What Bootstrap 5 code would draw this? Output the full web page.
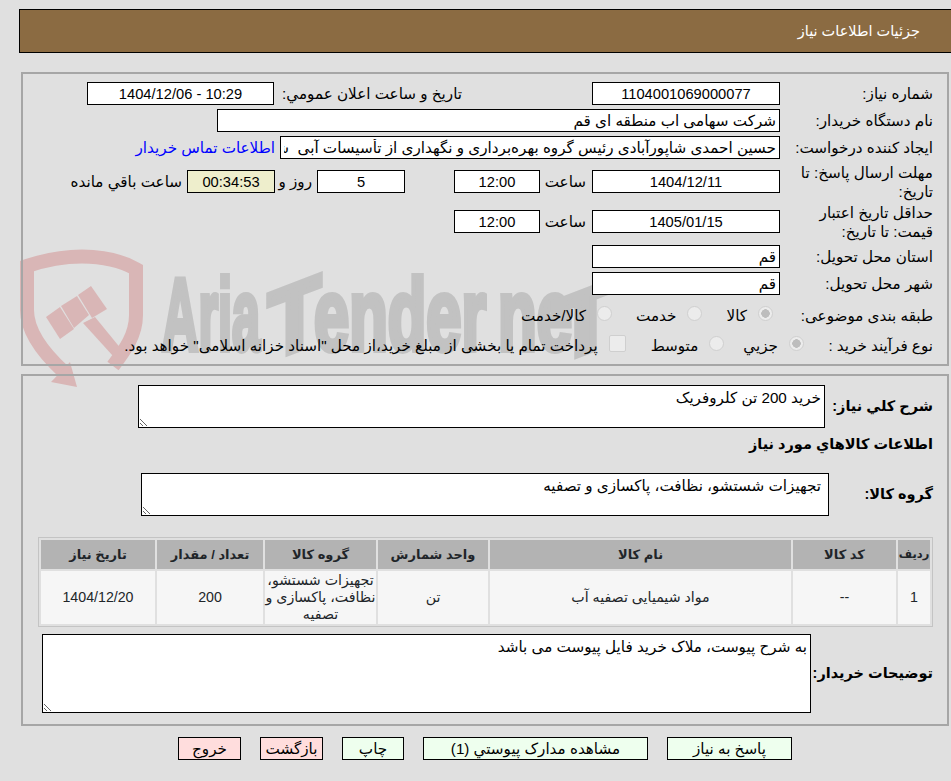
<!DOCTYPE html>
<html lang="fa" dir="rtl">
<head>
<meta charset="utf-8">
<title>جزئیات اطلاعات نیاز</title>
<link href="https://cdn.jsdelivr.net/npm/bootstrap@5.3.0/dist/css/bootstrap.min.css" rel="stylesheet">
<style>
html,body{height:781px;overflow:hidden}
body{background:#e0e0e0;color:#000;font:15.2px/19px "Liberation Sans","DejaVu Sans",sans-serif;position:relative}
.wm{position:absolute;left:0;top:0;z-index:-1;direction:ltr}
.wm-txt{font:700 102px "Liberation Sans",sans-serif;fill:#c2c2c2;stroke:#c2c2c2;stroke-width:6px}
.wm-t1{font-size:96px}
.wm-t2{font-size:90px}
.page-head{height:44px;margin:9px 0 19px 19px;background:#8b6b42;border:1px solid #000;border-right:0;color:#fff;padding-right:31px;font-size:14.5px}
.pane{margin:0 2px 8px 21px;border:2px solid #a6a6a6}
.pane-a{height:294px;padding-top:8px}
.pane-b{height:352px;padding-top:9px}
.frow{display:flex;align-items:center;height:23px;margin-bottom:4px}
.lbl{flex:none;width:167px;padding-right:14px}
.fld.form-control{flex:none;height:23px;min-height:0;padding:0 3px;border:1px solid #000;border-radius:0;background:#fff;color:#000;font:inherit;box-shadow:none}
.fld.num{font-size:14.7px}
.w-188{width:188px}.w-187{width:187px}.w-86{width:86px}.w-88{width:88px}
.w-563{width:563px}.w-500{width:500px}
.pub-lbl{margin-right:130px;width:182px}
.pub-val{margin-right:6px}
.row-first{margin-top:11px}
.row-second{margin-top:17px}
.row-prov{margin-top:12px}
.row-kind{margin-top:9px;margin-bottom:7px}
.hour-lbl{margin-right:6px;width:46px}
.day-val{margin-right:49px}
.day-lbl{margin-right:5px;width:37px}
.rem-lbl{margin-right:5px}
.hr-wait.form-control{background:#eeeecc;padding:0}
.buyer-link{margin-right:5px;color:#00f;text-decoration:none}
.chk{display:flex;align-items:center;flex:none}
.chk .form-check-input{flex:none;margin:0;float:none;width:15px;height:15px;background-color:#ececec;border:1px solid #cfcfcf;opacity:1;position:relative;top:-2px}
.chk .form-check-input:checked{background-color:#ececec;border-color:#cfcfcf;background-image:radial-gradient(circle,#bdbdbd 0 4px,transparent 4.5px);background-size:auto}
.chk .form-check-input[type=checkbox]{width:17px;height:17px;border-radius:2px}
.chk label{margin-right:11px;opacity:1!important;color:#000}
.m-k1{margin-right:7px}.m-k2{margin-right:24px}
.m-p1{margin-right:-24px}.m-p2{margin-right:19px}.m-p3{margin-right:25px}
.desc.form-control{flex:none;border:1px solid #000;border-radius:0;background:#fff;color:#000;font:inherit;padding:2px 3px;min-height:0;box-shadow:none}
.desc.ta-group{padding-right:7px}
.b-lbl{font-weight:700;font-size:14.5px;white-space:nowrap}
.lbl-need{width:122px}.lbl-group{width:118px}.lbl-note{width:136px}
.ta-need{width:687px;height:43px}
.ta-group{width:688px;height:43px}
.ta-note{width:769px;height:79px}
.sub-head{padding-right:14px;margin-top:7px;height:38px}
.note-row{margin-top:7px}
.items-wrap{margin:21px 14px 0 15px;border:1px solid #c4c4c4}
.items-tbl.table{width:100%;table-layout:fixed;border-collapse:separate;border-spacing:2px;margin:0;--bs-table-bg:transparent}
.items-tbl.table>:not(caption)>*>*{padding:0;border:0;box-shadow:none;vertical-align:middle;text-align:center}
.items-tbl.table>thead>tr>th{height:29px;background:#b3b3b3;font-size:13px;font-weight:700}
.items-tbl.table>thead>tr>th.th-tight{font-size:11.5px}
.items-tbl.table>tbody>tr>td{height:53px;background:#f6f6f6;line-height:17px;font-size:14.2px}
.c1{width:32px}.c2{width:103px}.c3{width:301px}.c4{width:110px}.c5{width:111px}.c6{width:106px}
.act.btn{height:23px;padding:0;border:1px solid #000;border-radius:0;color:#000;font:inherit;line-height:21px}
.act-ok.btn{background:#eeffee}
.act-no.btn{background:#ffdddd}
.act-row{padding-right:159px;gap:19px;margin-top:11px}
.b-125{width:125px}.b-225{width:225px}.b-62{width:62px}.b-63{width:63px}
</style>
</head>
<body>
<svg class="wm" width="951" height="781" viewBox="0 0 951 781" aria-hidden="true">
  <g fill="#d9b6b6">
    <path d="M64 372C40 350 27 330 27 310V266C45 260 65 256.500 82 256.500C100 256.500 120 260 136 269V315C136 335 125 350 113 366" fill="none" stroke="#d9b6b6" stroke-width="14"/>
    <polygon points="70,362 77,387 51,382"/>
    <polygon points="46,317 60,307 74,329 60,339"/>
    <polygon points="61,306 77,296 89,315 74,328"/>
    <polygon points="78,295 91,286 107,309 92,318"/>
    <polygon points="83,323 95,317 122,350 113,356"/>
  </g>
  <text class="wm-txt" x="162" y="350" textLength="98" lengthAdjust="spacingAndGlyphs">Aria</text>
  <text class="wm-txt wm-t1" transform="translate(268 361) skewY(-21)" textLength="53" lengthAdjust="spacingAndGlyphs">T</text>
  <text class="wm-txt" x="314" y="350" textLength="172" lengthAdjust="spacingAndGlyphs">ender</text>
  <text class="wm-txt" x="498" y="350" textLength="74" lengthAdjust="spacingAndGlyphs">ne</text>
  <text class="wm-txt wm-t2" transform="translate(553 365) skewY(-21)" textLength="65" lengthAdjust="spacingAndGlyphs">T</text>
</svg>

<header class="page-head d-flex align-items-center">جزئیات اطلاعات نیاز</header>

<section class="pane pane-a">
  <div class="frow">
    <div class="lbl">شماره نیاز:</div>
    <input class="fld num form-control w-188 text-center" readonly value="1104001069000077">
    <div class="pub-lbl">تاریخ و ساعت اعلان عمومي:</div>
    <input class="fld num pub-val form-control w-187 text-center" dir="ltr" readonly value="1404/12/06 - 10:29">
  </div>
  <div class="frow">
    <div class="lbl">نام دستگاه خریدار:</div>
    <input class="fld form-control w-563" readonly value="شرکت سهامی اب منطقه ای قم">
  </div>
  <div class="frow">
    <div class="lbl">ایجاد کننده درخواست:</div>
    <input class="fld form-control w-500" readonly value="حسین احمدی شاپورآبادی رئیس گروه بهره‌برداری و نگهداری از تأسیسات آبی  شرکت سهامی اب منطقه ای قم">
    <a class="buyer-link" href="#">اطلاعات تماس خریدار</a>
  </div>
  <div class="frow row-first">
    <div class="lbl">مهلت ارسال پاسخ: تا تاریخ:</div>
    <input class="fld num form-control w-188 text-center" readonly value="1404/12/11">
    <div class="hour-lbl">ساعت</div>
    <input class="fld num form-control w-86 text-center" readonly value="12:00">
    <input class="fld num day-val form-control w-88 text-center" readonly value="5">
    <div class="day-lbl">روز و</div>
    <input class="fld num hr-wait form-control w-88 text-center" readonly value="00:34:53">
    <div class="rem-lbl">ساعت باقي مانده</div>
  </div>
  <div class="frow row-second">
    <div class="lbl">حداقل تاریخ اعتبار<br>قیمت: تا تاریخ:</div>
    <input class="fld num form-control w-188 text-center" readonly value="1405/01/15">
    <div class="hour-lbl">ساعت</div>
    <input class="fld num form-control w-86 text-center" readonly value="12:00">
  </div>
  <div class="frow row-prov">
    <div class="lbl">استان محل تحویل:</div>
    <input class="fld form-control w-188" readonly value="قم">
  </div>
  <div class="frow">
    <div class="lbl">شهر محل تحویل:</div>
    <input class="fld form-control w-188" readonly value="قم">
  </div>
  <div class="frow row-kind">
    <div class="lbl">طبقه بندی موضوعی:</div>
    <div class="chk m-k1"><input class="form-check-input" type="radio" name="k" id="k1" checked disabled><label for="k1">کالا</label></div>
    <div class="chk m-k2"><input class="form-check-input" type="radio" name="k" id="k2" disabled><label for="k2">خدمت</label></div>
    <div class="chk m-k2"><input class="form-check-input" type="radio" name="k" id="k3" disabled><label for="k3">کالا/خدمت</label></div>
  </div>
  <div class="frow">
    <div class="lbl">نوع فرآیند خرید :</div>
    <div class="chk m-p1"><input class="form-check-input" type="radio" name="p" id="p1" checked disabled><label for="p1">جزیي</label></div>
    <div class="chk m-p2"><input class="form-check-input" type="radio" name="p" id="p2" disabled><label for="p2">متوسط</label></div>
    <div class="chk m-p3"><input class="form-check-input" type="checkbox" id="p3" disabled><label for="p3">پرداخت تمام یا بخشی از مبلغ خرید،از محل "اسناد خزانه اسلامی" خواهد بود.</label></div>
  </div>
</section>

<section class="pane pane-b">
  <div class="d-flex align-items-center">
    <div class="lbl b-lbl lbl-need">شرح کلي نیاز:</div>
    <textarea class="desc ta-need form-control" readonly>خرید 200 تن کلروفریک</textarea>
  </div>
  <div class="b-lbl sub-head">اطلاعات کالاهاي مورد نیاز</div>
  <div class="d-flex align-items-center">
    <div class="lbl b-lbl lbl-group">گروه کالا:</div>
    <textarea class="desc ta-group form-control" readonly>تجهیزات شستشو، نظافت، پاکسازی و تصفیه</textarea>
  </div>
  <div class="items-wrap">
    <table class="items-tbl table">
      <colgroup><col class="c1"><col class="c2"><col class="c3"><col class="c4"><col class="c5"><col class="c6"><col></colgroup>
      <thead><tr><th class="th-tight">ردیف</th><th>کد کالا</th><th>نام کالا</th><th>واحد شمارش</th><th>گروه کالا</th><th>تعداد / مقدار</th><th>تاریخ نیاز</th></tr></thead>
      <tbody><tr><td>1</td><td>--</td><td>مواد شیمیایی تصفیه آب</td><td>تن</td><td>تجهیزات شستشو، نظافت، پاکسازی و تصفیه</td><td>200</td><td>1404/12/20</td></tr></tbody>
    </table>
  </div>
  <div class="d-flex align-items-center note-row">
    <div class="lbl b-lbl lbl-note">توضیحات خریدار:</div>
    <textarea class="desc ta-note form-control" readonly>به شرح پیوست، ملاک خرید فایل پیوست می باشد</textarea>
  </div>
</section>

<div class="act-row d-flex">
  <button type="button" class="act act-ok btn b-125">پاسخ به نیاز</button>
  <button type="button" class="act act-ok btn b-225">مشاهده مدارک پیوستي (1)</button>
  <button type="button" class="act act-ok btn b-62">چاپ</button>
  <button type="button" class="act act-no btn b-63">بازگشت</button>
  <button type="button" class="act act-no btn b-63">خروج</button>
</div>
<script src="https://cdn.jsdelivr.net/npm/bootstrap@5.3.0/dist/js/bootstrap.bundle.min.js"></script>
</body>
</html>
